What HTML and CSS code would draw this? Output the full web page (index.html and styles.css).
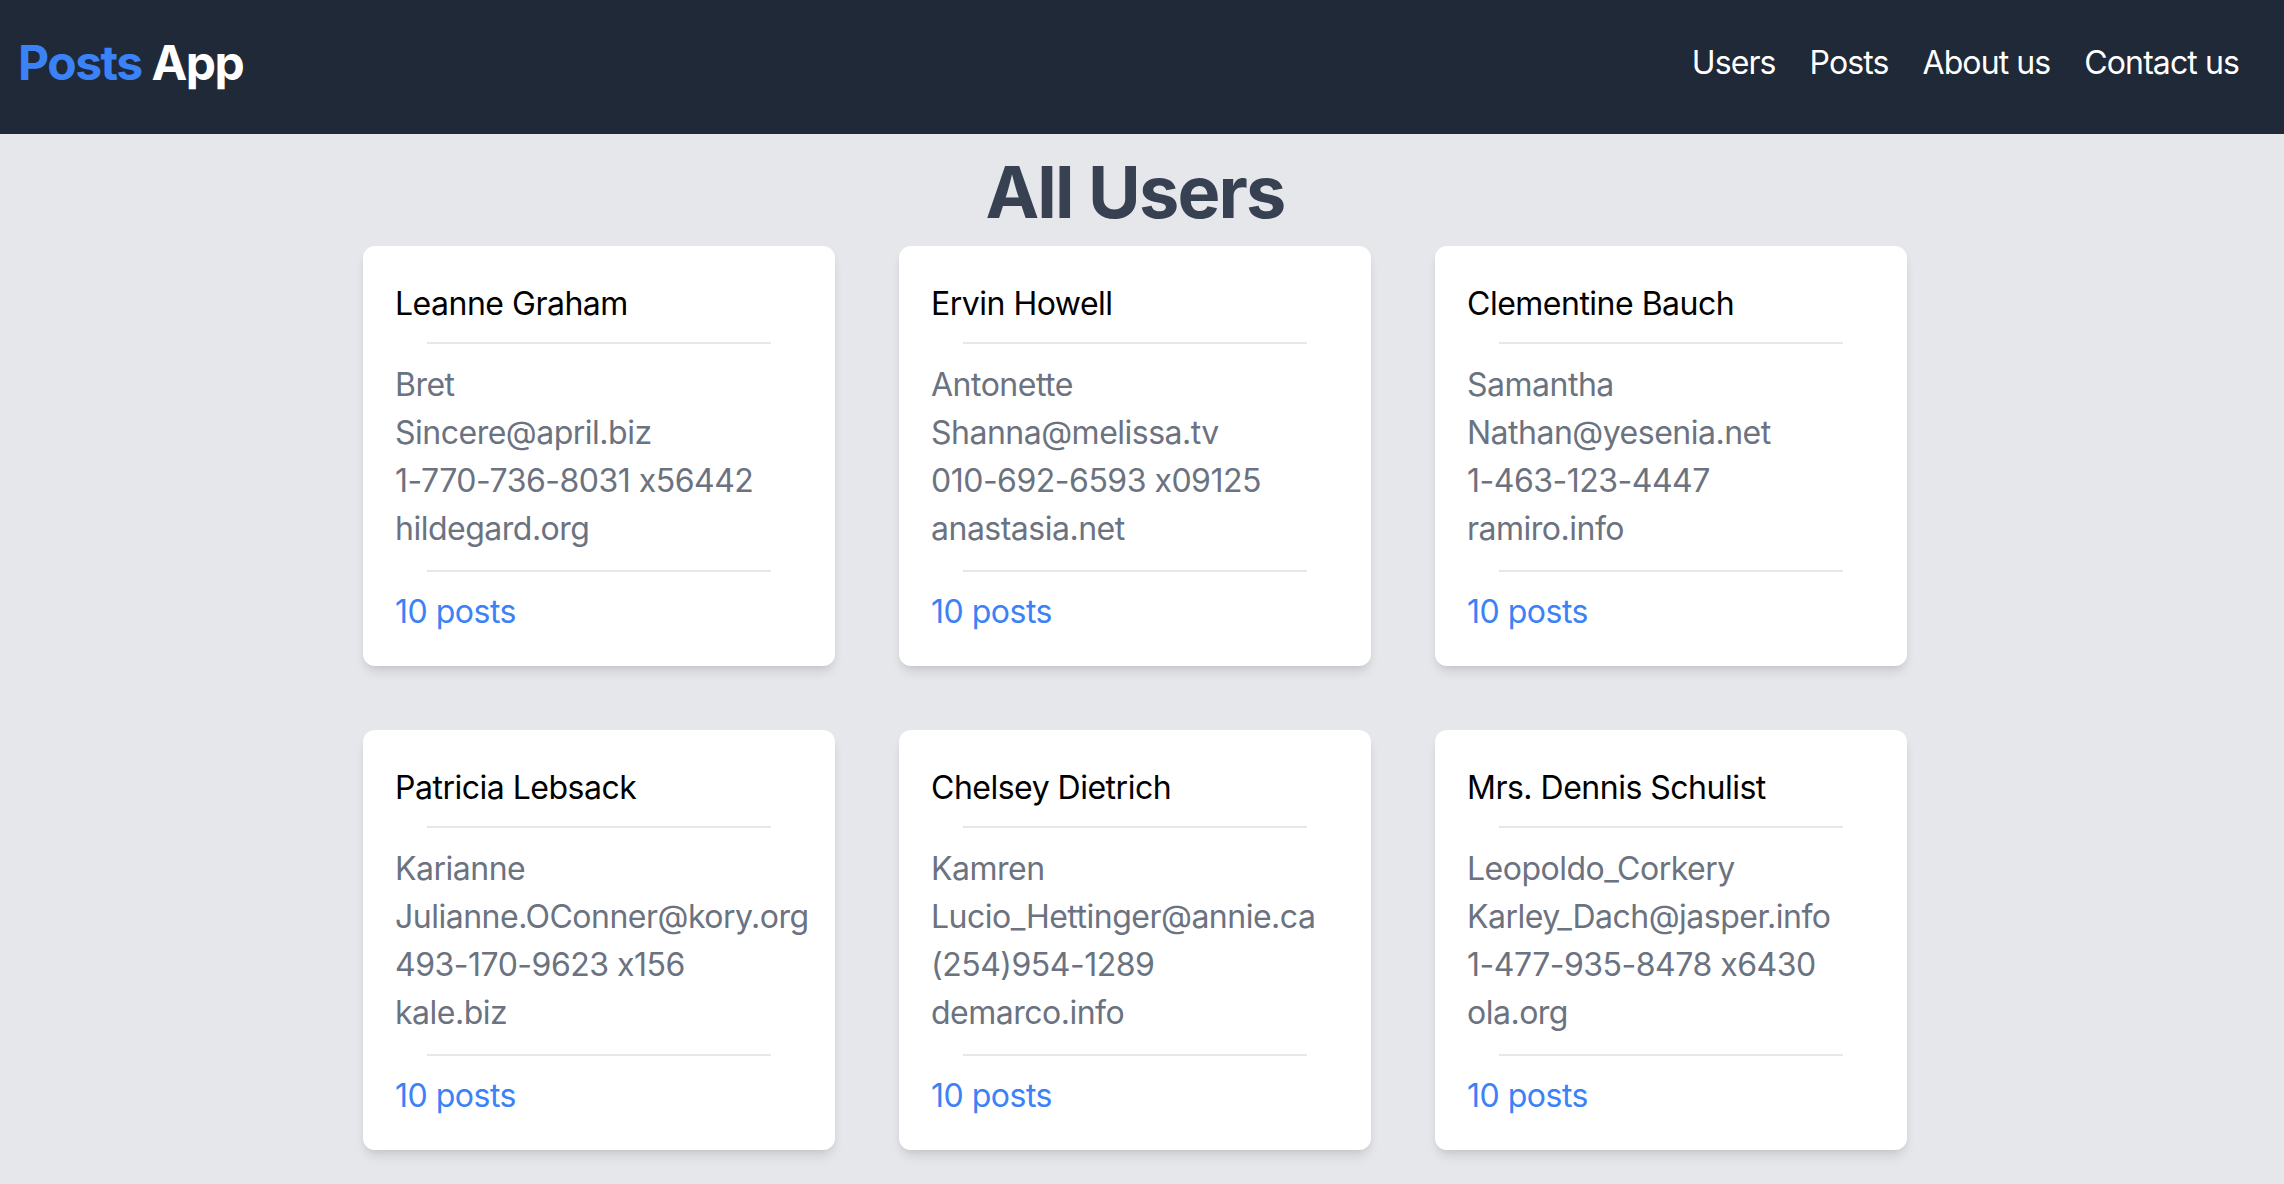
FILE: index.html
```html
<!DOCTYPE html>
<html lang="en">
<head>
<meta charset="utf-8">
<title>Posts App</title>
<link rel="stylesheet" href="styles.css">
</head>
<body>
<nav class="navbar">
  <a class="logo" href="#"><span class="logo-accent">Posts</span> App</a>
  <ul class="nav-links">
    <li><a href="#">Users</a></li>
    <li><a href="#">Posts</a></li>
    <li><a href="#">About us</a></li>
    <li><a href="#">Contact us</a></li>
  </ul>
</nav>
<main class="page">
  <h1 class="page-title">All Users</h1>
  <div class="user-grid">
    <article class="user-card">
      <h2 class="user-name">Leanne Graham</h2>
      <hr class="divider divider-top">
      <ul class="user-details">
        <li>Bret</li>
        <li>Sincere@april.biz</li>
        <li>1-770-736-8031 x56442</li>
        <li>hildegard.org</li>
      </ul>
      <hr class="divider divider-bottom">
      <a class="posts-link" href="#">10 posts</a>
    </article>
    <article class="user-card">
      <h2 class="user-name">Ervin Howell</h2>
      <hr class="divider divider-top">
      <ul class="user-details">
        <li>Antonette</li>
        <li>Shanna@melissa.tv</li>
        <li>010-692-6593 x09125</li>
        <li>anastasia.net</li>
      </ul>
      <hr class="divider divider-bottom">
      <a class="posts-link" href="#">10 posts</a>
    </article>
    <article class="user-card">
      <h2 class="user-name">Clementine Bauch</h2>
      <hr class="divider divider-top">
      <ul class="user-details">
        <li>Samantha</li>
        <li>Nathan@yesenia.net</li>
        <li>1-463-123-4447</li>
        <li>ramiro.info</li>
      </ul>
      <hr class="divider divider-bottom">
      <a class="posts-link" href="#">10 posts</a>
    </article>
    <article class="user-card">
      <h2 class="user-name">Patricia Lebsack</h2>
      <hr class="divider divider-top">
      <ul class="user-details">
        <li>Karianne</li>
        <li>Julianne.OConner@kory.org</li>
        <li>493-170-9623 x156</li>
        <li>kale.biz</li>
      </ul>
      <hr class="divider divider-bottom">
      <a class="posts-link" href="#">10 posts</a>
    </article>
    <article class="user-card">
      <h2 class="user-name">Chelsey Dietrich</h2>
      <hr class="divider divider-top">
      <ul class="user-details">
        <li>Kamren</li>
        <li>Lucio_Hettinger@annie.ca</li>
        <li>(254)954-1289</li>
        <li>demarco.info</li>
      </ul>
      <hr class="divider divider-bottom">
      <a class="posts-link" href="#">10 posts</a>
    </article>
    <article class="user-card">
      <h2 class="user-name">Mrs. Dennis Schulist</h2>
      <hr class="divider divider-top">
      <ul class="user-details">
        <li>Leopoldo_Corkery</li>
        <li>Karley_Dach@jasper.info</li>
        <li>1-477-935-8478 x6430</li>
        <li>ola.org</li>
      </ul>
      <hr class="divider divider-bottom">
      <a class="posts-link" href="#">10 posts</a>
    </article>
  </div>
</main>
</body>
</html>
```

FILE: styles.css
```css
* {
  box-sizing: border-box;
}

html, body {
  margin: 0;
  padding: 0;
}

body {
  background: #e5e7eb;
  font-family: Inter, "Noto Sans", "Liberation Sans", sans-serif;
  color: #000;
  min-height: 100vh;
}

a {
  text-decoration: none;
}

.navbar {
  display: flex;
  align-items: center;
  justify-content: space-between;
  background: #1f2937;
  height: 134px;
  padding: 31px 45px 39px 18px;
}

.logo {
  font-size: 48px;
  line-height: 64px;
  font-weight: 700;
  color: #ffffff;
  letter-spacing: -1.5px;
}

.logo-accent {
  color: #3b82f6;
}

.nav-links {
  display: flex;
  gap: 34px;
  list-style: none;
  margin: 0;
  padding: 0;
}

.nav-links a {
  color: #ffffff;
  font-size: 32px;
  line-height: 48px;
  letter-spacing: -0.9px;
}

.page {
  padding: 18px 14px 40px 0;
  display: flex;
  flex-direction: column;
  align-items: center;
}

.page-title {
  margin: 0 0 14px;
  font-size: 72px;
  line-height: 80px;
  font-weight: 700;
  color: #374151;
  letter-spacing: -1.8px;
}

.user-grid {
  display: grid;
  grid-template-columns: repeat(3, 472px);
  gap: 64px;
}

.user-card {
  background: #ffffff;
  border-radius: 12px;
  padding: 34px 32px 30px;
  box-shadow: 0 8px 12px -2px rgba(0, 0, 0, 0.10), 0 4px 8px -4px rgba(0, 0, 0, 0.08);
}

.user-name {
  margin: 0;
  font-size: 32px;
  line-height: 48px;
  font-weight: 400;
  color: #000000;
  letter-spacing: -0.5px;
}

.divider {
  border: none;
  height: 2px;
  background: #e5e7eb;
  margin: 16px 32px;
}

.divider-top {
  margin-top: 14px;
  margin-bottom: 17px;
}

.divider-bottom {
  margin-top: 17px;
  margin-bottom: 16px;
}

.user-details {
  list-style: none;
  margin: 0;
  padding: 0;
  font-size: 32px;
  line-height: 48px;
  color: #6b7280;
  letter-spacing: -0.5px;
}

.posts-link {
  display: block;
  font-size: 32px;
  line-height: 48px;
  color: #3b82f6;
  letter-spacing: -0.5px;
}
```
